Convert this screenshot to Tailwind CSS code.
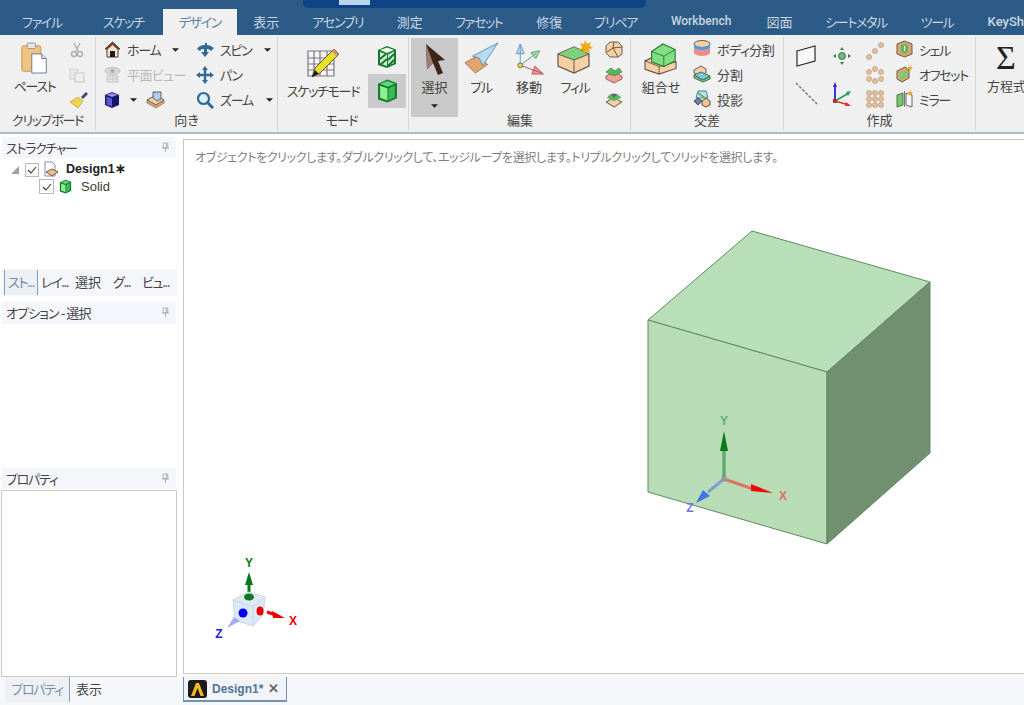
<!DOCTYPE html>
<html lang="ja">
<head>
  <meta charset="UTF-8"/>
  <title>Design1 - SpaceClaim</title>
  <script src="https://cdn.jsdelivr.net/npm/@tailwindcss/browser@4"></script>
</head>
<body class="w-[1024px] h-[705px] overflow-hidden bg-[#f6f7fb] text-[13px] leading-none tracking-[-1.3px] text-[#444] font-['Noto_Sans_CJK_JP','Noto_Sans',sans-serif] [font-feature-settings:'palt']">

  <!-- shared icon shapes -->
  <svg class="hidden">
    <symbol id="cube-green" viewBox="0 0 20 24"><path d="M10 1 19 4.500V19L10 23 1 20V5Z" fill="#0f7a2c"/><path d="M3 7 10 9.500V21L3 18.500Z" fill="#8ff08f"/><path d="M11 9.500 17 6.500V18L11 21Z" fill="#3fb858"/><path d="M3 5 10 2.500 17 5 10 8Z" fill="#62d47a"/></symbol>
    <symbol id="dot" viewBox="0 0 6 6"><circle cx="3" cy="3" r="2.500" fill="#e7c096" stroke="#a98f75" stroke-width=".6"/></symbol>
    <symbol id="pin" viewBox="0 0 10 12"><path d="M2.500 1H7.500V6.500H2.500ZM1 6.500H9M5 6.500V11M6 1.500V6" fill="none" stroke="#a9a9a9"/></symbol>
    <symbol id="caret" viewBox="0 0 8 4"><path d="M0 0H8L4 4Z" fill="#222"/></symbol>
  </svg>

  <!-- menu tabs -->
  <header class="h-[35px] bg-[#2c5b87] relative">
    <div class="absolute left-[303px] top-0 w-[343px] h-[8px] bg-[#0e4386] rounded-b-[5px]">
      <div class="ml-[36px] w-[31px] h-[5px] bg-[#bcd6ef]"></div>
    </div>
    <nav class="flex pt-[9px] h-[35px] text-[#c9d5e1] text-[13px] whitespace-nowrap">
      <span class="w-[84px] flex items-center justify-center pb-[2px]">ファイル</span>
      <span class="ml-[20px] w-[39px] flex items-center justify-center pb-[2px]">スケッチ</span>
      <span class="ml-[20px] w-[74px] bg-[#f0f0f0] text-[#5f83a3] flex items-center justify-center pb-[2px]">デザイン</span>
      <span class="ml-[16px] w-[27px] flex items-center justify-center pb-[2px] tracking-normal">表示</span>
      <span class="ml-[32px] w-[52px] flex items-center justify-center pb-[2px]">アセンブリ</span>
      <span class="ml-[33px] w-[26px] flex items-center justify-center pb-[2px] tracking-normal">測定</span>
      <span class="ml-[33px] w-[46px] flex items-center justify-center pb-[2px]">ファセット</span>
      <span class="ml-[34px] w-[27px] flex items-center justify-center pb-[2px] tracking-normal">修復</span>
      <span class="ml-[32px] w-[42px] flex items-center justify-center pb-[2px]">プリペア</span>
      <span class="ml-[34px] w-[61px] flex items-center justify-center pb-[2px] text-[12px] tracking-normal font-['Roboto',sans-serif] font-medium">Workbench</span>
      <span class="ml-[35px] w-[26px] flex items-center justify-center pb-[2px] tracking-normal">図面</span>
      <span class="ml-[33px] w-[61px] flex items-center justify-center pb-[2px]">シートメタル</span>
      <span class="ml-[35px] w-[31px] flex items-center justify-center pb-[2px]">ツール</span>
      <span class="ml-[35px] flex items-center pb-[2px] text-[13px] tracking-normal font-['Roboto',sans-serif] font-medium">KeySh</span>
    </nav>
  </header>

  <!-- ribbon -->
  <section class="h-[99px] bg-[#f0f0f0] border-b-[2px] border-[#a9bccd] flex pt-[2px] whitespace-nowrap">

    <!-- clipboard -->
    <div class="w-[96px] h-[93px] border-r border-[#d4d4d4] flex flex-col shrink-0">
      <div class="h-[72px] flex">
        <div class="w-[69px] flex flex-col items-center">
          <svg class="w-[29px] h-[33px] mt-[5px]" viewBox="0 0 32 36"><rect x="2" y="4" width="21" height="28" rx="2" fill="#f2c27f" stroke="#bf8f50"/><rect x="8" y="1" width="9" height="6" rx="1" fill="#e6e6e6" stroke="#8f8f8f"/><path d="M13 13H24L29 18V34H13Z" fill="#fff" stroke="#5b7896"/><path d="M24 13V18H29" fill="#dfe7ef" stroke="#5b7896"/></svg>
          <span class="mt-[4px]">ペースト</span>
        </div>
        <div class="flex flex-col gap-[9px] pt-[5px]">
          <svg class="w-[16px] h-[16px]" viewBox="0 0 16 16"><path d="M5 1 9 9M11 1 7 9" stroke="#b4b4b4" stroke-width="1.500"/><circle cx="5" cy="12" r="2.500" fill="none" stroke="#b0b0b0" stroke-width="1.500"/><circle cx="11" cy="12" r="2.500" fill="none" stroke="#b0b0b0" stroke-width="1.500"/></svg>
          <svg class="w-[16px] h-[16px]" viewBox="0 0 16 16"><rect x="1" y="2" width="8" height="10" fill="#e8e8e8" stroke="#cfcfcf"/><rect x="6" y="6" width="9" height="9" fill="#ededed" stroke="#c6c6c6"/></svg>
          <svg class="w-[19px] h-[17px]" viewBox="0 0 19 17"><path d="M13 6 18 1" stroke="#3e4a78" stroke-width="3"/><path d="M1 10 9 5 14 9 9 16Z" fill="#f2d24c" stroke="#a58f2f" stroke-width=".6"/></svg>
        </div>
      </div>
      <div class="mt-auto h-[21px] pt-[4px] text-center">クリップボード</div>
    </div>

    <!-- orientation -->
    <div class="w-[182px] h-[93px] border-r border-[#d4d4d4] flex flex-col shrink-0">
      <div class="h-[72px] grid grid-cols-[92px_82px] grid-rows-[25px_25px_25px] pl-[8px]">
        <div class="flex items-center gap-[6px]">
          <svg class="w-[17px] h-[17px]" viewBox="0 0 17 17"><path d="M8.500 1 16 8H14V16H3V8H1Z" fill="#efe6cf" stroke="#4c3b2a"/><path d="M8.500 1 16 8H13L8.500 4 4 8H1Z" fill="#7d3b22"/><rect x="6" y="10" width="5" height="6" fill="#1b1b1b"/></svg>
          <span>ホーム</span><svg class="w-[7px] h-[4px] ml-[6px]"><use href="#caret"/></svg>
        </div>
        <div class="flex items-center gap-[6px]">
          <svg class="w-[18px] h-[16px]" viewBox="0 0 18 16"><path d="M9 3C5 3 3 4 1 7L4 9C5 7 6 7 8 7V10L5 10 9 15 13 10H11V7C13 7 14 8 15 9L18 6C15 4 13 3 11 3V1H9Z" fill="#2f6b96"/></svg>
          <span>スピン</span><svg class="w-[7px] h-[4px] ml-[7px]"><use href="#caret"/></svg>
        </div>
        <div class="flex items-center gap-[6px] text-[#b9b9b9] tracking-[-0.6px]">
          <svg class="w-[17px] h-[17px]" viewBox="0 0 17 17"><ellipse cx="8.500" cy="5" rx="7.500" ry="3.500" fill="#d8d8d8" stroke="#bdbdbd"/><circle cx="8.500" cy="5" r="2" fill="#a9a9a9"/><path d="M3 10H14V16H3ZM6 10V16M9 10V16M12 10V16M3 13H14" fill="none" stroke="#c3c3c3"/></svg>
          <span>平面ビュー</span>
        </div>
        <div class="flex items-center gap-[6px]">
          <svg class="w-[18px] h-[18px]" viewBox="0 0 18 18"><path d="M9 0 12 4H10.200V7.800H14V6L18 9 14 12V10.200H10.200V14H12L9 18 6 14H7.800V10.200H4V12L0 9 4 6V7.800H7.800V4H6Z" fill="#2f6b96"/></svg>
          <span>パン</span>
        </div>
        <div class="flex items-center gap-[3px]">
          <svg class="w-[16px] h-[18px]" viewBox="0 0 16 18"><path d="M1 4 8 1 15 4V14L8 17 1 14Z" fill="#16166e"/><path d="M2.500 5.500 8 7.500V15.500L2.500 13.500Z" fill="#5b5bd0"/><path d="M2.500 4 8 2 13.500 4 8 6Z" fill="#8f8fe8"/></svg>
          <svg class="w-[7px] h-[4px] ml-[7px]"><use href="#caret"/></svg>
          <svg class="w-[19px] h-[19px] ml-[6px]" viewBox="0 0 19 19"><path d="M1 10 10 5 18 10 10 15Z" fill="#f6cfa3" stroke="#6b5a4a"/><path d="M1 13 10 18 18 13V10L10 15 1 10Z" fill="#dca36e" stroke="#6b5a4a" stroke-width=".6"/><path d="M7 2H15V9L11 11 7 8Z" fill="#b9cbe6" stroke="#4d6488"/></svg>
        </div>
        <div class="flex items-center gap-[6px]">
          <svg class="w-[18px] h-[18px]" viewBox="0 0 18 18"><circle cx="7.500" cy="7.500" r="5.500" fill="#dff0fb" stroke="#2f6b96" stroke-width="2.200"/><path d="M11.500 11.500 17 17" stroke="#2f6b96" stroke-width="3"/></svg>
          <span>ズーム</span><svg class="w-[7px] h-[4px] ml-[7px]"><use href="#caret"/></svg>
        </div>
      </div>
      <div class="mt-auto h-[21px] pt-[4px] text-center tracking-normal">向き</div>
    </div>

    <!-- mode -->
    <div class="w-[131px] h-[93px] border-r border-[#d4d4d4] flex flex-col shrink-0">
      <div class="h-[72px] flex">
        <div class="w-[90px] flex flex-col items-center">
          <svg class="w-[34px] h-[34px] mt-[9px]" viewBox="0 0 34 34"><path d="M2 5H28V30H2ZM2 12H28M2 18H28M2 24H28M8 5V30M14 5V30M21 5V30" fill="#f4f4f4" stroke="#7d7684" stroke-width="1.200"/><path d="M6 31 9 22 28 3 33 8 14 27Z" fill="#e8e12b" stroke="#5b5a20"/><path d="M6 31 9 24 13 28Z" fill="#222"/><path d="M28 3 33 8 30 10 26 5Z" fill="#d88b7e"/></svg>
          <span class="mt-[4px]">スケッチモード</span>
        </div>
        <div class="flex flex-col items-center">
          <svg class="w-[20px] h-[24px] mt-[8px]" viewBox="0 0 20 24"><path d="M10 1 19 4.500V19L10 23 1 20V5Z" fill="#0f7a2c"/><path d="M3 7 10 9.500V21L3 18.500Z" fill="#d8ecd8"/><path d="M11 9.500 17 6.500V18L11 21Z" fill="#cfe8cf"/><path d="M3 5 10 2.500 17 5 10 8Z" fill="#eef6ee"/><path d="M3 14 9 9M3 20 10 14M11 15 17 9M11 21 17 15" stroke="#0f7a2c" stroke-width="2"/></svg>
          <div class="mt-[5px] w-[38px] h-[34px] bg-[#cbcbcb] flex items-center justify-center">
            <svg class="w-[21px] h-[26px]"><use href="#cube-green"/></svg>
          </div>
        </div>
      </div>
      <div class="mt-auto h-[21px] pt-[4px] pl-[35px] pr-[38px] text-center">モード</div>
    </div>

    <!-- edit -->
    <div class="w-[222px] h-[93px] border-r border-[#d4d4d4] flex shrink-0 pl-[2px]">
      <div class="w-[47px] h-[79px] mt-[1px] bg-[#c9c9c9] flex flex-col items-center shrink-0">
        <svg class="w-[24px] h-[32px] mt-[5px]" viewBox="0 0 24 32"><path d="M3 1 22 17 15 18 20 30 15 32 10 20 4 26Z" fill="#3f2418"/><path d="M3 1 10 20 4 26Z" fill="#9a7f70"/></svg>
        <span class="mt-[5px] tracking-normal">選択</span>
        <svg class="w-[7px] h-[4px] mt-[11px]"><use href="#caret"/></svg>
      </div>
      <div class="flex-1 flex flex-col">
        <div class="h-[72px] flex">
          <div class="w-[46px] flex flex-col items-center">
            <svg class="w-[36px] h-[32px] mt-[5px]" viewBox="0 0 36 34"><path d="M1 22 14 15 25 24 12 33Z" fill="#e3a56e" stroke="#9b7650"/><path d="M36 1 20 25 16 17 9 15Z" fill="#b7dbf2" stroke="#5e90b8"/></svg>
            <span class="mt-[6px]">プル</span>
          </div>
          <div class="w-[50px] flex flex-col items-center">
            <svg class="w-[34px] h-[33px] mt-[5px]" viewBox="0 0 34 34"><path d="M8 24V2M8 2 4 12H12Z" stroke="#6a9bc4" fill="#bcdcf2"/><path d="M8 24 24 12M28 9 19 11 24 17Z" stroke="#5fa070" fill="#a6e0ae"/><path d="M8 24 30 32M32 33 20 33 23 25Z" stroke="#b5545a" fill="#f09a9a"/><circle cx="8" cy="24" r="2.500" fill="#e9dc3a" stroke="#666"/></svg>
            <span class="mt-[5px] tracking-normal">移動</span>
          </div>
          <div class="w-[42px] flex flex-col items-center">
            <svg class="w-[36px] h-[34px] mt-[3px]" viewBox="0 0 36 34"><path d="M1 14 17 7 32 14V26L17 33 1 26Z" fill="#f7cfa4" stroke="#63564a" stroke-width="1.200"/><path d="M2 14 17 7 31 14 17 20Z" fill="#7cd27a"/><path d="M17 20V33M1 14 17 20 32 14" fill="none" stroke="#63564a"/><path d="M28 0 30 4 34 2 32.500 6 36 8 32 9 33 13 29.500 11 27 14 26 10 22 10 25 7 23 3 27 4Z" fill="#f4a81c"/></svg>
            <span class="mt-[6px]">フィル</span>
          </div>
          <div class="flex flex-col gap-[6px] pl-[9px] pt-[3px]">
            <svg class="w-[18px] h-[19px]" viewBox="0 0 18 19"><path d="M5 2H13L17 6V14L13 17H5L1 13V6Z" fill="#f6cfa3" stroke="#6b5a4a"/><path d="M9 2 8 8 2 12M8 8 13 17M8 8 17 7" fill="none" stroke="#6b5a4a"/></svg>
            <svg class="w-[18px] h-[19px]" viewBox="0 0 18 19"><path d="M1 11 9 7 17 11V14L9 18 1 14Z" fill="#f3a093" stroke="#6b5a4a" stroke-width=".8"/><path d="M1 7 6 3 10 6 14 3 17 7 9 11Z" fill="#55b85a" stroke="#34703a" stroke-width=".6"/></svg>
            <svg class="w-[18px] h-[19px]" viewBox="0 0 18 19"><path d="M1 12 9 8 17 12 9 17Z" fill="#f6cfa3" stroke="#6b5a4a"/><path d="M2 8C4 2 14 2 16 8L9 11Z" fill="#55b85a"/><path d="M6 4 9 8 12 4" fill="#7c4a9e"/></svg>
          </div>
        </div>
        <div class="mt-auto h-[21px] pt-[4px] pr-[48px] text-center tracking-normal">編集</div>
      </div>
    </div>

    <!-- intersect -->
    <div class="w-[153px] h-[93px] border-r border-[#d4d4d4] flex flex-col shrink-0">
      <div class="h-[72px] flex">
        <div class="w-[62px] pr-[2px] flex flex-col items-center">
          <svg class="w-[36px] h-[32px] mt-[6px]" viewBox="0 0 36 34"><path d="M1 19 12 14 34 20V27L16 33 1 28Z" fill="#f7cfa4" stroke="#63564a" stroke-width="1.200"/><path d="M1 19 16 25 34 20M16 25V33" fill="none" stroke="#63564a"/><path d="M8 9 20 1 33 7V19L21 25 8 20Z" fill="#7ee07e" stroke="#2c7a3a" stroke-width="1.200"/><path d="M8 9 21 14 33 7M21 14V25" fill="none" stroke="#2c7a3a"/></svg>
          <span class="mt-[5px] tracking-normal">組合せ</span>
        </div>
        <div class="flex flex-col gap-[7px] pt-[3px]">
          <div class="h-[18px] flex items-center gap-[6px] tracking-[-0.5px]"><svg class="w-[18px] h-[18px]" viewBox="0 0 18 18"><ellipse cx="9" cy="4" rx="8" ry="3.500" fill="#f6cfa3" stroke="#6b5a4a"/><path d="M1 4V8C3 11 15 11 17 8V4C15 8 3 8 1 4Z" fill="#4f9ed8"/><path d="M1 8V13C3 17 15 17 17 13V8C15 11 3 11 1 8Z" fill="#ef8a8a"/></svg><span>ボディ分割</span></div>
          <div class="h-[18px] flex items-center gap-[6px] tracking-normal"><svg class="w-[18px] h-[18px]" viewBox="0 0 18 18"><path d="M1 5 8 1 13 4V8L6 11 1 8Z" fill="#f6cfa3" stroke="#6b5a4a"/><path d="M1 10 8 7 17 11 10 15Z" fill="#7bc6e8" stroke="#48705a"/><path d="M1 10V13L10 17 17 14V11L10 15Z" fill="#70c070" stroke="#48705a"/></svg><span>分割</span></div>
          <div class="h-[18px] flex items-center gap-[6px] tracking-normal"><svg class="w-[18px] h-[18px]" viewBox="0 0 18 18"><path d="M5 1H13L15 8H3Z" fill="#bfe0f2" stroke="#4d7ba0"/><path d="M1 11 5 8 9 11 5 15Z" fill="#6a7fb0" stroke="#3d4a66"/><path d="M9 11 13 8 17 11V15L13 17 9 15Z" fill="#f2c08d" stroke="#5c4c3e"/><path d="M5 3 12 8" stroke="#55b85a" stroke-width="2"/></svg><span>投影</span></div>
        </div>
      </div>
      <div class="mt-auto h-[21px] pt-[4px] text-center tracking-normal">交差</div>
    </div>

    <!-- create -->
    <div class="w-[192px] h-[93px] border-r border-[#d4d4d4] flex flex-col shrink-0">
      <div class="h-[72px] flex pl-[11px]">
        <div class="w-[38px] flex flex-col gap-[15px] pt-[8px]">
          <svg class="w-[21px] h-[22px]" viewBox="0 0 21 22"><path d="M2 6 20 1V16L2 21Z" fill="#fafafa" stroke="#2a2a2a" stroke-width="1.200"/></svg>
          <svg class="w-[23px] h-[23px]" viewBox="0 0 23 23"><path d="M1 1 22 22" stroke="#77787a" stroke-width="1.400" stroke-dasharray="3 1.500"/></svg>
        </div>
        <div class="w-[33px] flex flex-col gap-[17px] pt-[10px]">
          <svg class="w-[18px] h-[18px]" viewBox="0 0 18 18"><circle cx="9" cy="9" r="3.500" fill="#79b57c" stroke="#3c7a48"/><path d="M9 0 11 3H7ZM9 18 7 15H11ZM0 9 3 7V11ZM18 9 15 11V7Z" fill="#3c7a48"/></svg>
          <svg class="w-[18px] h-[24px]" viewBox="0 0 18 24"><path d="M2 19V3" stroke="#2222dd" stroke-width="1.800"/><path d="M2 0 0 5H4Z" fill="#2222dd"/><path d="M2 19 16 11" stroke="#2aa050" stroke-width="1.800"/><path d="M18 9 13 10 15 14Z" fill="#2aa050"/><path d="M2 19 16 23" stroke="#e03030" stroke-width="1.800"/><path d="M18 24 13 20 12 24Z" fill="#e03030"/><rect x="0" y="17" width="4" height="4" fill="#b03a2a"/></svg>
        </div>
        <div class="w-[30px] flex flex-col gap-[6px] pt-[5px]">
          <svg class="w-[18px] h-[18px]" viewBox="0 0 18 18"><use href="#dot" x="0" y="12" width="6" height="6"/><use href="#dot" x="6" y="6" width="6" height="6"/><use href="#dot" x="12" y="0" width="6" height="6"/></svg>
          <svg class="w-[18px] h-[18px]" viewBox="0 0 18 18"><use href="#dot" x="6" y="0" width="6" height="6"/><use href="#dot" x="0" y="3" width="6" height="6"/><use href="#dot" x="12" y="3" width="6" height="6"/><use href="#dot" x="0" y="10" width="6" height="6"/><use href="#dot" x="12" y="10" width="6" height="6"/><use href="#dot" x="6" y="12" width="6" height="6"/></svg>
          <svg class="w-[18px] h-[18px]" viewBox="0 0 18 18"><use href="#dot" x="0" y="0" width="6" height="6"/><use href="#dot" x="6" y="0" width="6" height="6"/><use href="#dot" x="12" y="0" width="6" height="6"/><use href="#dot" x="0" y="6" width="6" height="6"/><use href="#dot" x="6" y="6" width="6" height="6"/><use href="#dot" x="12" y="6" width="6" height="6"/><use href="#dot" x="0" y="12" width="6" height="6"/><use href="#dot" x="6" y="12" width="6" height="6"/><use href="#dot" x="12" y="12" width="6" height="6"/></svg>
        </div>
        <div class="flex flex-col gap-[7px] pt-[3px]">
          <div class="h-[18px] flex items-center gap-[6px]"><svg class="w-[17px] h-[18px]" viewBox="0 0 17 18"><path d="M8.500 1 16 4V14L8.500 17 1 14V4Z" fill="#d9a56e" stroke="#6b5a4a"/><path d="M5 5 8.500 4 12 5V12L8.500 14 5 12Z" fill="#5fb85f"/><path d="M8 6H9V11H8Z" fill="#fff"/></svg><span>シェル</span></div>
          <div class="h-[18px] flex items-center gap-[6px]"><svg class="w-[17px] h-[18px]" viewBox="0 0 17 18"><path d="M1 6 9 2 13 5V13L6 17 1 14Z" fill="#d9a56e" stroke="#6b5a4a"/><path d="M4 8 11 5V12L4 15Z" fill="#79cc72"/><path d="M14 0 15 2 17 3 15 4 14 6 13 4 11 3 13 2Z" fill="#f4a81c"/></svg><span>オフセット</span></div>
          <div class="h-[18px] flex items-center gap-[6px]"><svg class="w-[17px] h-[18px]" viewBox="0 0 17 18"><path d="M1 5 7 3V15L1 17Z" fill="#7bc46c" stroke="#3c7a48"/><path d="M10 3 16 5V17L10 15Z" fill="#f7f7f7" stroke="#666"/><path d="M8.500 1V17" stroke="#777"/><path d="M14 0 15 2 17 3 15 4 14 6 13 4 11 3 13 2Z" fill="#f4a81c"/></svg><span>ミラー</span></div>
        </div>
      </div>
      <div class="mt-auto h-[21px] pt-[4px] text-center tracking-normal">作成</div>
    </div>

    <!-- equations -->
    <div class="flex-1 pl-[11px] overflow-hidden tracking-normal">
      <div class="text-[34px] leading-[36px] text-[#222] pl-[9px] mt-[3px] font-['Liberation_Serif',serif]">Σ</div>
      <div class="mt-[3px]">方程式</div>
    </div>
  </section>

  <div class="flex h-[570px]">
    <!-- left panels -->
    <aside class="w-[183px] shrink-0 flex flex-col bg-white relative whitespace-nowrap">
      <div class="h-[3px] bg-white"></div>
      <div class="mx-[2px] w-[174px] h-[21px] bg-[#f5f6fb] flex items-center justify-between pl-[4px] pr-[6px] pb-[1px]">
        <span>ストラクチャー</span><svg class="w-[9px] h-[11px]"><use href="#pin"/></svg>
      </div>
      <div class="h-[111px] pt-[3px] pl-[10px] text-[13px] tracking-normal font-['Liberation_Sans',sans-serif] text-[#222]">
        <div class="h-[17px] flex items-center">
          <svg class="w-[10px] h-[8px]" viewBox="0 0 10 8"><path d="M9 0V8H1Z" fill="#a2a2a2"/></svg>
          <span class="ml-[5px] w-[14px] h-[14px] border border-[#b9b9b9] flex items-center justify-center"><svg class="w-[10px] h-[8px]" viewBox="0 0 10 8"><path d="M1 4 4 7 9 1" fill="none" stroke="#333" stroke-width="1.100"/></svg></span>
          <svg class="ml-[4px] w-[16px] h-[17px]" viewBox="0 0 16 17"><path d="M2 1H9L12 4V15H2Z" fill="#fff" stroke="#7b90ab"/><path d="M3 11 9 8 15 11 9 15Z" fill="#eebf8d" stroke="#6b5a4a"/></svg>
          <span class="ml-[7px] text-[12.500px] font-bold text-[#222]">Design1∗</span>
        </div>
        <div class="h-[17px] flex items-center pl-[29px]">
          <span class="w-[15px] h-[15px] border border-[#b9b9b9] flex items-center justify-center"><svg class="w-[10px] h-[8px]" viewBox="0 0 10 8"><path d="M1 4 4 7 9 1" fill="none" stroke="#333" stroke-width="1.100"/></svg></span>
          <svg class="ml-[5px] w-[13px] h-[15px]"><use href="#cube-green"/></svg>
          <span class="ml-[9px] text-[#3f3a2c]">Solid</span>
        </div>
      </div>
      <div class="h-[27px] ml-[2px] w-[175px] bg-[#f5f6fb] flex items-center text-[#444]">
        <span class="ml-[2px] w-[34px] h-[25px] bg-[#eceff4] border-x border-[#7c9fbd] text-[#6f8ba5] flex items-center justify-center pb-[2px]">スト...</span>
        <span class="ml-[3px] w-[34px] pb-[2px]">レイ...</span>
        <span class="w-[38px] pb-[2px] tracking-normal">選択</span>
        <span class="w-[29px] pb-[2px]">グ...</span>
        <span class="pb-[2px]">ビュ...</span>
      </div>
      <div class="h-[6px]"></div>
      <div class="mx-[2px] w-[174px] h-[22px] bg-[#f5f6fb] flex items-center justify-between pl-[4px] pr-[6px] pb-[2px]">
        <span class="tracking-[-0.9px]">オプション - 選択</span><svg class="w-[9px] h-[11px]"><use href="#pin"/></svg>
      </div>
      <div class="h-[144px]"></div>
      <div class="mx-[2px] w-[174px] h-[21px] bg-[#f5f6fb] flex items-center justify-between pl-[4px] pr-[6px] pb-[1px]">
        <span>プロパティ</span><svg class="w-[9px] h-[11px]"><use href="#pin"/></svg>
      </div>
      <div class="mx-[1px] mt-[1px] w-[176px] h-[187px] border border-[#c9c9c9] bg-white"></div>
      <div class="flex-1 bg-[#f6f7fb] flex items-start pl-[5px]">
        <span class="w-[65px] h-[25px] bg-[#eef0f4] border-r border-[#7c9fbd] text-[#7390aa] flex items-center justify-center pb-[3px]">プロパティ</span>
        <span class="ml-[6px] h-[25px] flex items-center pb-[3px] tracking-normal">表示</span>
      </div>
    </aside>

    <!-- viewport -->
    <main class="flex-1 flex flex-col">
      <div class="h-[5px] bg-white"></div>
      <div class="relative w-full h-[535px] border border-[#cdc9b8] border-r-0 bg-white overflow-hidden">
        <p class="absolute left-[11px] top-[11px] text-[12px] tracking-[-0.35px] text-[#808080] whitespace-nowrap">オブジェクトをクリックします。ダブルクリックして、エッジループを選択します。トリプルクリックしてソリッドを選択します。</p>
        <svg class="w-full h-full block tracking-normal" viewBox="184 140 840 533" font-family="Liberation Sans, sans-serif" font-weight="700">
          <!-- model -->
          <path d="M648 320 752 231 930 282 827 372Z" fill="#b9dfb9" stroke="#5e8a62"/>
          <path d="M648 320 827 372V544L648 492Z" fill="#b7dcb6" stroke="#5e8a62"/>
          <path d="M827 372 930 282V453L827 544Z" fill="#70906f" stroke="#5e8a62"/>
          <!-- model triad -->
          <path d="M724 479V450" stroke="#5fac70" stroke-width="3.500"/>
          <path d="M724 431 720 451H728Z" fill="#0a7a18"/>
          <path d="M724 479 753 489" stroke="#dc7468" stroke-width="3"/>
          <path d="M773 493 751 484 751 491Z" fill="#f00808"/>
          <path d="M724 479 708 492" stroke="#7d9fcc" stroke-width="3"/>
          <path d="M696 503 703 490 710 496Z" fill="#3d74e8"/>
          <rect x="721.500" y="476.500" width="5" height="5" fill="#8d9a90"/>
          <text x="724" y="425" font-size="12" fill="#62ad78" text-anchor="middle">Y</text>
          <text x="783" y="500" font-size="12" fill="#e86c64" text-anchor="middle">X</text>
          <text x="690" y="512" font-size="12" fill="#7272f0" text-anchor="middle">Z</text>
          <!-- orientation cube -->
          <path d="M249 592V580" stroke="#0a7a18" stroke-width="3"/>
          <path d="M249 572 245 585H253Z" fill="#0a7a18"/>
          <path d="M233 600 249 592 265 597 263 615 253 626 235 620Z" fill="#dde9f6" stroke="#c5d4e6"/>
          <path d="M233 600 253 607 265 597M253 607V626" fill="none" stroke="#c5d4e6"/>
          <ellipse cx="249" cy="597" rx="5" ry="3.500" fill="#0a7a18"/>
          <circle cx="243" cy="613" r="4.500" fill="#0000f0"/>
          <ellipse cx="260" cy="611" rx="3.500" ry="4.500" fill="#f00000"/>
          <path d="M267 612 276 615" stroke="#f00000" stroke-width="3"/>
          <path d="M285 618 272 611 273 618Z" fill="#f00000"/>
          <path d="M227 628 234 617 240 621Z" fill="#a9a9f8"/>
          <text x="249" y="567" font-size="12" fill="#0a7a18" text-anchor="middle">Y</text>
          <text x="293" y="625" font-size="12" fill="#f00000" text-anchor="middle">X</text>
          <text x="219" y="638" font-size="12" fill="#2020e0" text-anchor="middle">Z</text>
        </svg>
      </div>
      <div class="flex-1 bg-[#f6f7fb] pt-[3px]">
        <div class="w-[104px] h-[25px] bg-[#f3f4f8] border border-t-0 border-[#6f94b5] border-b-2 flex items-center pl-[4px] tracking-normal">
          <svg class="w-[19px] h-[18px] shrink-0" viewBox="0 0 19 18"><rect width="19" height="18" rx="3" fill="#1c1c1c"/><path d="M3 16 8 3H11L16 16H12.500L9.500 8 6.500 16Z" fill="#f6b81c"/></svg>
          <span class="ml-[5px] text-[12px] font-bold text-[#4f7598] font-['Liberation_Sans',sans-serif] whitespace-nowrap">Design1*</span>
          <span class="ml-[5px] text-[13px] font-bold text-[#6a6a6a] font-['Liberation_Sans',sans-serif]">✕</span>
        </div>
      </div>
    </main>
  </div>
</body>
</html>
